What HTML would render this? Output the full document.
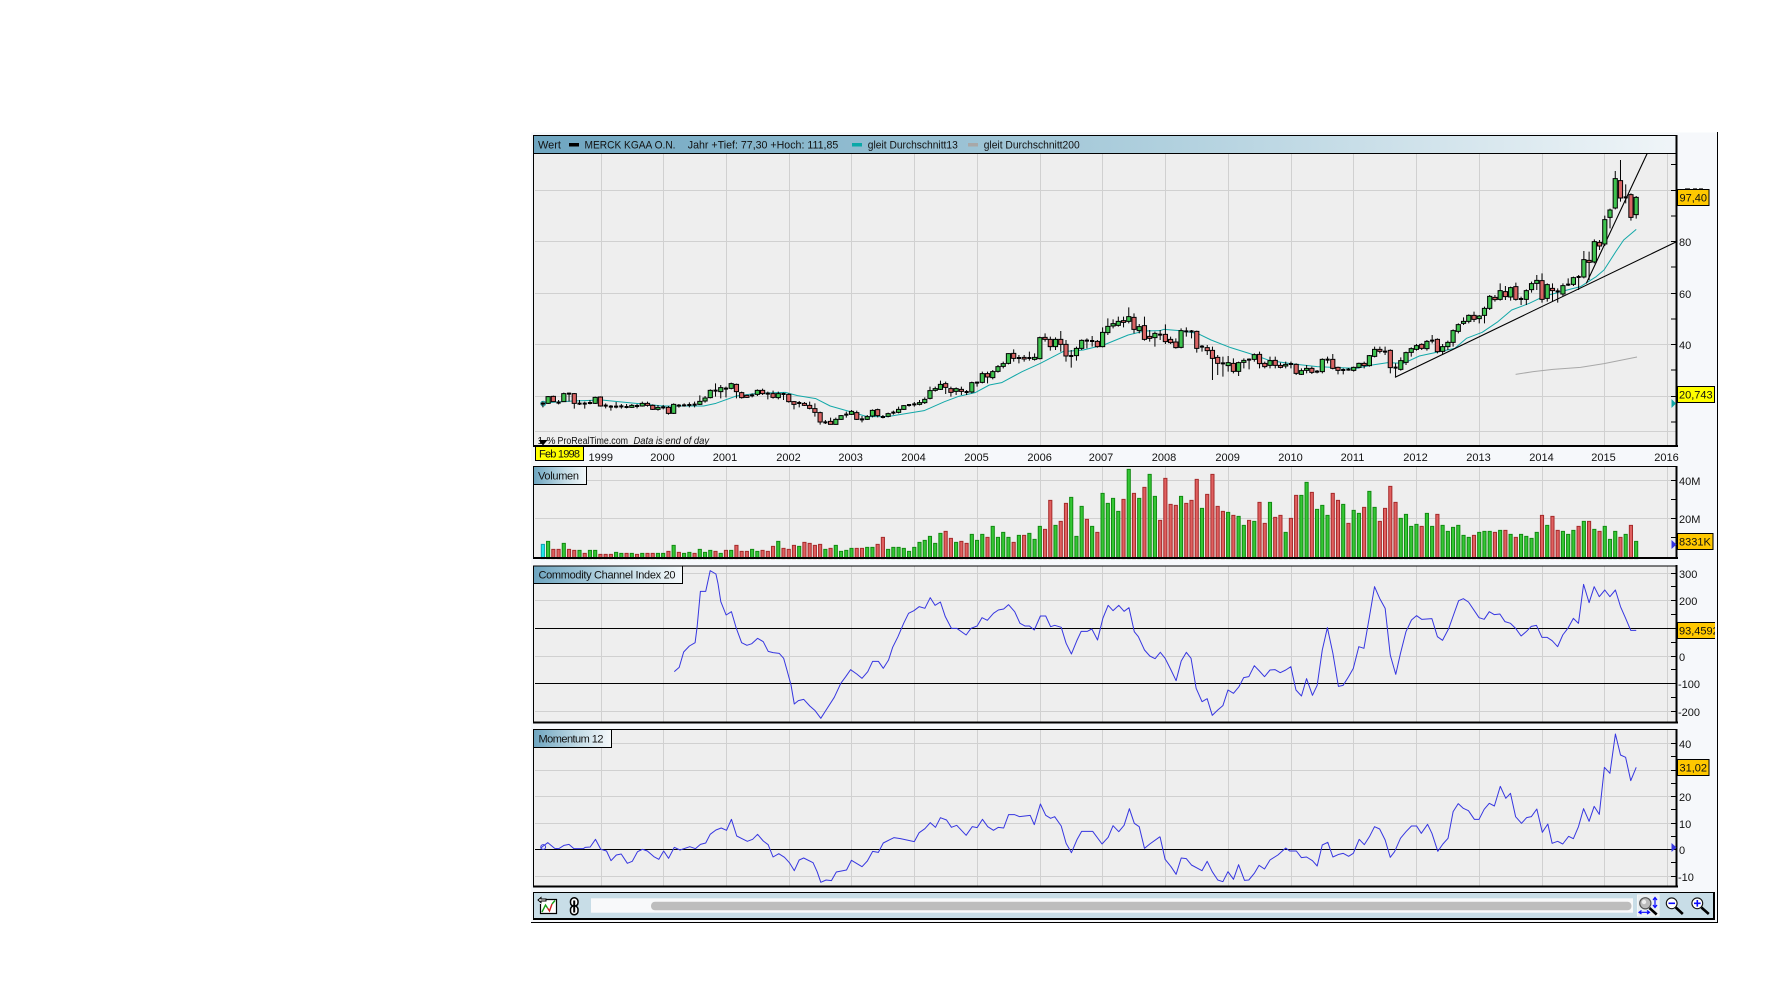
<!DOCTYPE html>
<html><head><meta charset="utf-8"><title>Merck KGaA chart</title>
<style>
html,body{margin:0;padding:0;background:#fff}
svg{display:block}
svg path{vector-effect:non-scaling-stroke}
text{font-family:"Liberation Sans",sans-serif;font-size:11px;fill:#111}
</style></head><body>
<svg xmlns="http://www.w3.org/2000/svg" width="1776" height="1003" viewBox="0 0 1776 1003">
<defs>
<linearGradient id="hd" x1="0" x2="1" y1="0" y2="0"><stop offset="0" stop-color="#6ea5c0"/><stop offset=".55" stop-color="#b0d0de"/><stop offset="1" stop-color="#f0f5f8"/></linearGradient>
<linearGradient id="lb" x1="0" x2="1" y1="0" y2="0"><stop offset="0" stop-color="#6ea5c0"/><stop offset=".6" stop-color="#c5dde7"/><stop offset="1" stop-color="#f4f8fa"/></linearGradient>
<path id="v" d="M601.5 0V1M663.5 0V1M726.5 0V1M789.5 0V1M851.5 0V1M914.5 0V1M977.5 0V1M1040.5 0V1M1102.5 0V1M1165.5 0V1M1228.5 0V1M1291.5 0V1M1353.5 0V1M1416.5 0V1M1479.5 0V1M1542.5 0V1M1604.5 0V1M1667.5 0V1"/>
</defs>
<rect x="531" y="132.5" width="1186" height="789.5" fill="#f6f8fb"/>
<path d="M1717.5 132V922M531 922.5H1718" stroke="#000" fill="none"/>

<!-- panels bg -->
<rect x="534" y="153" width="1142" height="292" fill="#eee"/>
<rect x="534" y="466" width="1142" height="92" fill="#eee"/>
<rect x="534" y="566" width="1142" height="156" fill="#eee"/>
<rect x="534" y="729" width="1142" height="157" fill="#eee"/>

<!-- grids -->
<g stroke="#d0d0d0" fill="none">
<use href="#v" transform="translate(0 153) scale(1 292)"/>
<use href="#v" transform="translate(0 466) scale(1 92)"/>
<use href="#v" transform="translate(0 566) scale(1 156)"/>
<use href="#v" transform="translate(0 729) scale(1 157)"/>
<path d="M535 190.5H1676M535 241.5H1676M535 293.5H1676M535 344.5H1676M535 396.5H1676M535 431.5H1676"/>
<path d="M535 480.5H1676M535 518.5H1676"/>
<path d="M535 573.5H1676M535 600.5H1676M535 656.5H1676M535 711.5H1676"/>
<path d="M535 743.5H1676M535 770.5H1676M535 796.5H1676M535 823.5H1676M535 876.5H1676"/>
</g>

<!-- header -->
<rect x="534" y="136" width="1142" height="17" fill="url(#hd)"/>
<text x="538" y="148.5" textLength="23" lengthAdjust="spacingAndGlyphs">Wert</text>
<rect x="569" y="143" width="10" height="3.5" fill="#000"/>
<text x="584.5" y="148.5" textLength="91" lengthAdjust="spacingAndGlyphs">MERCK KGAA O.N.</text>
<text x="687.8" y="148.5" textLength="150.5" lengthAdjust="spacingAndGlyphs">Jahr +Tief: 77,30 +Hoch: 111,85</text>
<rect x="852" y="143" width="10" height="3.5" fill="#0aa8a8"/>
<text x="867.8" y="148.5" textLength="90" lengthAdjust="spacingAndGlyphs">gleit Durchschnitt13</text>
<rect x="968" y="143" width="10" height="3.5" fill="#a8a8a8"/>
<text x="983.7" y="148.5" textLength="96" lengthAdjust="spacingAndGlyphs">gleit Durchschnitt200</text>

<!-- MA and trend lines -->
<g fill="none" stroke-linejoin="round">
<path transform="translate(520 120) scale(.40816 .33333)" stroke="#12a8a8" d="M56 849L90 846L130 843L200 840L240 845L300 852L350 858L400 858L450 858L480 850L530 828L580 820L650 817L680 827L725 836L760 858L812 876L850 890L900 890L930 884L990 872L1040 845L1075 829L1115 818L1150 795L1180 788L1230 755L1275 730L1330 695L1380 690L1430 675L1490 645L1530 633L1568 632"/>
<path transform="translate(1160 120) scale(.39293 .33333)" stroke="#12a8a8" d="M0 632L10 628L50 632L95 640L130 660L180 683L240 705L280 722L340 732L400 740L440 742L500 745L540 735L580 728L620 730L660 708L700 698L750 685L780 655L820 637L860 605L895 570L940 550L975 530L1030 512L1070 500L1110 470L1130 450L1160 395L1180 360L1212 328"/>
<path transform="translate(1160 120) scale(.39293 .33333)" stroke="#a8a8a8" d="M905 763L950 755L1000 748L1070 742L1130 731L1214 711"/>
<path transform="translate(1160 120) scale(.39293 .33333)" stroke="#000" stroke-width="1.1" d="M598 772L1315 365M1085 490L1240 100"/>
<circle cx="543.2" cy="403.6" r="2.4" stroke="#12a8a8"/>
</g>

<!-- wicks -->
<path transform="translate(542.9 120) scale(5.231 .33333)" stroke="#000" fill="none" d="M0 845V862M1 828V852M2 827V846M3 840V853M4 818V846M5 818V845M6 819V866M7 840V855M8 845V866M9 840V853M10 830V852M11 829V860M12 850V865M13 855V872M14 846V865M15 852V866M16 852V865M17 852V864M18 852V865M19 845V860M20 845V860M21 853V870M22 855V872M23 855V868M24 858V884M25 850V882M26 852V863M27 850V860M28 847V862M29 845V862M30 826V855M31 828V848M32 808V835M33 790V830M34 795V835M35 800V832M36 788V808M37 791V835M38 815V836M39 824V834M40 820V832M41 808V828M42 806V825M43 815V838M44 812V836M45 815V838M46 818V840M47 820V848M48 843V868M49 843V862M50 846V858M51 845V868M52 850V890M53 875V914M54 900V912M55 893V914M56 893V914M57 885V900M58 875V893M59 870V885M60 872V900M61 888V907M62 885V900M63 868V892M64 866V892M65 885V895M66 878V892M67 872V884M68 860V880M69 855V870M70 852V860M71 846V860M72 840V856M73 832V852M74 800V838M75 800V815M76 782V810M77 785V822M78 800V830M79 802V825M80 800V825M81 810V825M82 785V820M83 785V800M84 755V790M85 755V790M86 750V778M87 735V758M88 725V745M89 700V733M90 688V725M91 705V730M92 705V725M93 695V722M94 700V722M95 650V718M96 640V665M97 650V692M98 652V690M99 633V695M100 660V725M101 690V743M102 680V722M103 658V690M104 655V685M105 648V680M106 660V683M107 622V682M108 595V645M109 598V625M110 590V620M111 590V622M112 562V610M113 580V640M114 612V640M115 590V662M116 630V665M117 635V680M118 630V660M119 613V672M120 650V672M121 655V686M122 625V685M123 622V650M124 630V655M125 632V698M126 675V695M127 675V705M128 680V780M129 705V765M130 710V770M131 708V755M132 715V760M133 725V768M134 715V745M135 715V748M136 700V725M137 695V745M138 725V745M139 710V745M140 710V745M141 728V745M142 725V745M143 725V745M144 730V765M145 745V765M146 735V760M147 740V762M148 750V760M149 715V760M150 710V730M151 702V748M152 740V763M153 745V763M154 744V752M155 740V755M156 728V745M157 725V745M158 705V740M159 680V712M160 680V700M161 680V705M162 688V760M163 730V770M164 712V752M165 695V735M166 682V710M167 672V692M168 670V690M169 660V692M170 645V670M171 655V700M172 672V705M173 662V690M174 628V680M175 610V640M176 592V615M177 583V610M178 575V606M179 585V610M180 560V610M181 525V570M182 525V545M183 490V542M184 498V540M185 500V542M186 488V542M187 530V555M188 508V555M189 485V518M190 465V510M191 460V548M192 490V545M193 490V545M194 505V548M195 490V528M196 475V498M197 470V498M198 465V510M199 393V475M200 395V480M201 358V430M202 360V390M203 287V378M204 266V325M205 153V268M206 120V245M207 193V250M208 220V302M209 228V296"/>

<!-- candle bodies -->
<g transform="translate(540.8 120) scale(5.231 .33333)" stroke="#000">
<path fill="#3fc24f" d="M1 830h.8V850h-.8zM4 821h.8V845h-.8zM10 832h.8V850h-.8zM17 856h.8V862h-.8zM19 850h.8V858h-.8zM22 862h.8V868h-.8zM25 853h.8V880h-.8zM30 844h.8V853h-.8zM31 834h.8V843h-.8zM32 811h.8V833h-.8zM34 803h.8V815h-.8zM36 791h.8V805h-.8zM41 811h.8V823h-.8zM45 821h.8V833h-.8zM56 898h.8V913h-.8zM57 887h.8V898h-.8zM59 874h.8V883h-.8zM62 890h.8V898h-.8zM63 871h.8V888h-.8zM66 881h.8V889h-.8zM68 868h.8V877h-.8zM69 857h.8V868h-.8zM72 848h.8V853h-.8zM73 838h.8V848h-.8zM74 812h.8V835h-.8zM75 806h.8V811h-.8zM76 793h.8V808h-.8zM79 806h.8V814h-.8zM82 788h.8V816h-.8zM84 761h.8V787h-.8zM86 755h.8V773h-.8zM87 740h.8V754h-.8zM88 731h.8V739h-.8zM89 701h.8V730h-.8zM94 712h.8V718h-.8zM95 653h.8V716h-.8zM98 658h.8V680h-.8zM102 685h.8V707h-.8zM103 661h.8V685h-.8zM107 637h.8V680h-.8zM108 619h.8V638h-.8zM109 611h.8V618h-.8zM110 604h.8V616h-.8zM112 590h.8V604h-.8zM114 620h.8V632h-.8zM117 640h.8V653h-.8zM122 632h.8V682h-.8zM131 728h.8V737h-.8zM133 728h.8V754h-.8zM134 721h.8V727h-.8zM136 704h.8V718h-.8zM139 722h.8V736h-.8zM142 733h.8V738h-.8zM145 752h.8V763h-.8zM146 745h.8V751h-.8zM149 718h.8V755h-.8zM155 742h.8V751h-.8zM156 730h.8V742h-.8zM158 707h.8V737h-.8zM159 688h.8V709h-.8zM164 722h.8V748h-.8zM165 698h.8V727h-.8zM166 686h.8V697h-.8zM167 677h.8V688h-.8zM169 664h.8V686h-.8zM172 680h.8V694h-.8zM173 667h.8V680h-.8zM174 632h.8V667h-.8zM175 614h.8V634h-.8zM176 604h.8V610h-.8zM177 586h.8V604h-.8zM179 588h.8V596h-.8zM180 565h.8V586h-.8zM181 529h.8V565h-.8zM183 512h.8V538h-.8zM185 503h.8V531h-.8zM188 512h.8V538h-.8zM189 491h.8V509h-.8zM190 481h.8V490h-.8zM192 494h.8V535h-.8zM195 497h.8V522h-.8zM197 473h.8V493h-.8zM199 419h.8V471h-.8zM201 365h.8V426h-.8zM203 299h.8V372h-.8zM204 270h.8V292h-.8zM205 176h.8V264h-.8zM209 232h.8V284h-.8z"/>
<path fill="#d96464" d="M2 829h.8V845h-.8zM6 821h.8V850h-.8zM11 831h.8V858h-.8zM20 850h.8V856h-.8zM21 856h.8V868h-.8zM24 862h.8V880h-.8zM37 793h.8V815h-.8zM38 818h.8V833h-.8zM39 826h.8V832h-.8zM42 811h.8V821h-.8zM44 821h.8V832h-.8zM47 823h.8V845h-.8zM48 845h.8V853h-.8zM50 850h.8V856h-.8zM51 856h.8V865h-.8zM52 866h.8V877h-.8zM53 878h.8V906h-.8zM55 904h.8V913h-.8zM60 878h.8V898h-.8zM64 869h.8V887h-.8zM77 791h.8V802h-.8zM78 806h.8V817h-.8zM80 808h.8V814h-.8zM85 761h.8V771h-.8zM90 700h.8V715h-.8zM92 712h.8V717h-.8zM96 652h.8V658h-.8zM97 658h.8V680h-.8zM99 658h.8V673h-.8zM100 673h.8V708h-.8zM106 664h.8V680h-.8zM111 602h.8V607h-.8zM113 592h.8V628h-.8zM115 617h.8V658h-.8zM116 649h.8V655h-.8zM119 643h.8V665h-.8zM120 658h.8V668h-.8zM121 666h.8V683h-.8zM125 634h.8V685h-.8zM127 683h.8V692h-.8zM128 691h.8V715h-.8zM129 712h.8V730h-.8zM132 730h.8V754h-.8zM137 703h.8V731h-.8zM138 730h.8V740h-.8zM140 721h.8V736h-.8zM141 736h.8V742h-.8zM144 733h.8V760h-.8zM147 745h.8V757h-.8zM151 718h.8V745h-.8zM152 742h.8V751h-.8zM157 730h.8V737h-.8zM160 688h.8V694h-.8zM162 691h.8V743h-.8zM168 673h.8V685h-.8zM171 658h.8V695h-.8zM178 586h.8V598h-.8zM182 532h.8V539h-.8zM184 515h.8V530h-.8zM186 500h.8V538h-.8zM191 482h.8V538h-.8zM193 505h.8V512h-.8zM200 421h.8V427h-.8zM202 367h.8V378h-.8zM206 182h.8V234h-.8zM208 224h.8V292h-.8z"/>
<path fill="none" stroke-width="2" d="M0 851h.8M3 848h.8M5 821h.8M7 851h.8M8 851h.8M9 849h.8M12 857h.8M13 860h.8M14 860h.8M15 859h.8M16 861h.8M18 858h.8M23 862h.8M26 857h.8M27 856h.8M28 855h.8M29 854h.8M33 812h.8M35 806h.8M40 826h.8M43 821h.8M46 822h.8M49 849h.8M54 907h.8M58 884h.8M61 898h.8M65 891h.8M67 878h.8M70 855h.8M71 853h.8M81 816h.8M83 788h.8M91 714h.8M93 714h.8M101 708h.8M104 662h.8M105 663h.8M118 644h.8M123 634h.8M124 634h.8M126 680h.8M130 730h.8M135 719h.8M143 732h.8M148 755h.8M150 719h.8M153 750h.8M154 749h.8M161 695h.8M163 743h.8M170 662h.8M187 537h.8M194 514h.8M196 494h.8M198 471h.8M207 232h.8"/>
</g>

<!-- main frame -->
<path d="M533.5 445V135.5H1676M534 153.5H1676M1676.5 135V447M533 446H1678" stroke="#000" fill="none"/>
<path d="M533 446H1678" stroke="#000" stroke-width="2" fill="none"/>
<path d="M1676.5 135V447" stroke="#000" stroke-width="2" fill="none"/>
<path d="M1671 164.5H1676M1671 190.5H1676M1671 216H1676M1671 241.5H1676M1671 267H1676M1671 293.5H1676M1671 319H1676M1671 344.5H1676M1671 370H1676M1671 396.5H1676M1671 422H1676" stroke="#000" fill="none"/>

<!-- bottom notes -->
<text x="537.5" y="444" style="font-size:10px" textLength="18" lengthAdjust="spacingAndGlyphs">1-%</text>
<text x="557.5" y="444" style="font-size:10px" textLength="70.5" lengthAdjust="spacingAndGlyphs">ProRealTime.com</text>
<text x="633.5" y="444" style="font-size:10px;font-style:italic" textLength="75.5" lengthAdjust="spacingAndGlyphs">Data is end of day</text>
<path d="M538.5 440H547.5L543 445.5Z" fill="#000"/>

<!-- date axis -->
<rect x="535.5" y="446.5" width="48" height="14" fill="#ff0" stroke="#000"/>
<text x="559.5" y="457.5" text-anchor="middle" textLength="41" lengthAdjust="spacing">Feb 1998</text>
<g text-anchor="middle">
<text x="600.8" y="461">1999</text><text x="662.5" y="461">2000</text><text x="725" y="461">2001</text><text x="788.5" y="461">2002</text><text x="850.6" y="461">2003</text><text x="913.5" y="461">2004</text><text x="976.5" y="461">2005</text><text x="1039.6" y="461">2006</text><text x="1101" y="461">2007</text><text x="1164" y="461">2008</text><text x="1227.6" y="461">2009</text><text x="1290.5" y="461">2010</text><text x="1352.5" y="461">2011</text><text x="1415.5" y="461">2012</text><text x="1478.5" y="461">2013</text><text x="1541.5" y="461">2014</text><text x="1603.5" y="461">2015</text><text x="1666.5" y="461">2016</text>
</g>

<!-- volume -->
<g transform="translate(541.3 450) scale(5.231 .33333)">
<path fill="#20e8e8" stroke="#10a0b0" d="M0 283h.6V326h-.6z"/>
<path fill="#35c735" stroke="#118a11" d="M1 274h.6V326h-.6zM4 280h.6V326h-.6zM7 301h.6V326h-.6zM9 301h.6V326h-.6zM10 301h.6V326h-.6zM14 307h.6V326h-.6zM15 310h.6V326h-.6zM17 310h.6V326h-.6zM19 310h.6V326h-.6zM22 310h.6V326h-.6zM23 310h.6V326h-.6zM25 286h.6V326h-.6zM27 310h.6V326h-.6zM28 307h.6V326h-.6zM30 298h.6V326h-.6zM31 307h.6V326h-.6zM32 301h.6V326h-.6zM34 310h.6V326h-.6zM36 301h.6V326h-.6zM40 298h.6V326h-.6zM41 304h.6V326h-.6zM45 274h.6V326h-.6zM49 289h.6V326h-.6zM54 298h.6V326h-.6zM56 286h.6V326h-.6zM57 304h.6V326h-.6zM58 301h.6V326h-.6zM59 295h.6V326h-.6zM62 292h.6V326h-.6zM63 292h.6V326h-.6zM66 298h.6V326h-.6zM67 292h.6V326h-.6zM68 292h.6V326h-.6zM69 295h.6V326h-.6zM70 304h.6V326h-.6zM71 292h.6V326h-.6zM72 277h.6V326h-.6zM73 271h.6V326h-.6zM74 259h.6V326h-.6zM75 280h.6V326h-.6zM76 250h.6V326h-.6zM79 277h.6V326h-.6zM82 253h.6V326h-.6zM83 271h.6V326h-.6zM84 253h.6V326h-.6zM86 229h.6V326h-.6zM87 262h.6V326h-.6zM88 247h.6V326h-.6zM89 262h.6V326h-.6zM91 256h.6V326h-.6zM93 250h.6V326h-.6zM94 268h.6V326h-.6zM95 229h.6V326h-.6zM98 226h.6V326h-.6zM101 142h.6V326h-.6zM102 259h.6V326h-.6zM103 169h.6V326h-.6zM105 229h.6V326h-.6zM107 130h.6V326h-.6zM108 160h.6V326h-.6zM109 145h.6V326h-.6zM110 184h.6V326h-.6zM112 58h.6V326h-.6zM114 145h.6V326h-.6zM116 73h.6V326h-.6zM117 139h.6V326h-.6zM122 139h.6V326h-.6zM126 175h.6V326h-.6zM131 187h.6V326h-.6zM133 199h.6V326h-.6zM134 226h.6V326h-.6zM136 214h.6V326h-.6zM139 157h.6V326h-.6zM142 247h.6V326h-.6zM145 136h.6V326h-.6zM146 97h.6V326h-.6zM148 178h.6V326h-.6zM149 166h.6V326h-.6zM150 196h.6V326h-.6zM153 163h.6V326h-.6zM155 181h.6V326h-.6zM156 190h.6V326h-.6zM158 124h.6V326h-.6zM159 172h.6V326h-.6zM164 205h.6V326h-.6zM165 193h.6V326h-.6zM166 229h.6V326h-.6zM167 223h.6V326h-.6zM169 190h.6V326h-.6zM170 229h.6V326h-.6zM172 226h.6V326h-.6zM173 244h.6V326h-.6zM174 232h.6V326h-.6zM175 226h.6V326h-.6zM176 256h.6V326h-.6zM177 262h.6V326h-.6zM179 247h.6V326h-.6zM180 244h.6V326h-.6zM181 244h.6V326h-.6zM183 241h.6V326h-.6zM185 253h.6V326h-.6zM187 253h.6V326h-.6zM188 259h.6V326h-.6zM189 265h.6V326h-.6zM190 247h.6V326h-.6zM192 226h.6V326h-.6zM195 244h.6V326h-.6zM196 253h.6V326h-.6zM197 241h.6V326h-.6zM199 214h.6V326h-.6zM201 238h.6V326h-.6zM203 229h.6V326h-.6zM204 268h.6V326h-.6zM205 244h.6V326h-.6zM207 253h.6V326h-.6zM209 274h.6V326h-.6z"/>
<path fill="#e06060" stroke="#a52a2a" d="M2 298h.6V326h-.6zM3 298h.6V326h-.6zM5 298h.6V326h-.6zM6 301h.6V326h-.6zM8 310h.6V326h-.6zM11 313h.6V326h-.6zM12 313h.6V326h-.6zM13 313h.6V326h-.6zM16 310h.6V326h-.6zM18 313h.6V326h-.6zM20 310h.6V326h-.6zM21 310h.6V326h-.6zM24 304h.6V326h-.6zM26 307h.6V326h-.6zM29 310h.6V326h-.6zM33 304h.6V326h-.6zM35 301h.6V326h-.6zM37 286h.6V326h-.6zM38 304h.6V326h-.6zM39 304h.6V326h-.6zM42 301h.6V326h-.6zM43 304h.6V326h-.6zM44 289h.6V326h-.6zM46 295h.6V326h-.6zM47 298h.6V326h-.6zM48 286h.6V326h-.6zM50 277h.6V326h-.6zM51 280h.6V326h-.6zM52 286h.6V326h-.6zM53 283h.6V326h-.6zM55 295h.6V326h-.6zM60 295h.6V326h-.6zM61 295h.6V326h-.6zM64 283h.6V326h-.6zM65 262h.6V326h-.6zM77 244h.6V326h-.6zM78 265h.6V326h-.6zM80 274h.6V326h-.6zM81 280h.6V326h-.6zM85 262h.6V326h-.6zM90 277h.6V326h-.6zM92 256h.6V326h-.6zM96 238h.6V326h-.6zM97 151h.6V326h-.6zM99 214h.6V326h-.6zM100 160h.6V326h-.6zM104 208h.6V326h-.6zM106 247h.6V326h-.6zM111 148h.6V326h-.6zM113 130h.6V326h-.6zM115 112h.6V326h-.6zM118 211h.6V326h-.6zM119 85h.6V326h-.6zM120 163h.6V326h-.6zM121 166h.6V326h-.6zM123 160h.6V326h-.6zM124 151h.6V326h-.6zM125 88h.6V326h-.6zM127 133h.6V326h-.6zM128 73h.6V326h-.6zM129 169h.6V326h-.6zM130 184h.6V326h-.6zM132 196h.6V326h-.6zM135 211h.6V326h-.6zM137 157h.6V326h-.6zM138 220h.6V326h-.6zM140 202h.6V326h-.6zM141 196h.6V326h-.6zM143 205h.6V326h-.6zM144 136h.6V326h-.6zM147 127h.6V326h-.6zM151 130h.6V326h-.6zM152 151h.6V326h-.6zM154 220h.6V326h-.6zM157 172h.6V326h-.6zM160 214h.6V326h-.6zM161 175h.6V326h-.6zM162 109h.6V326h-.6zM163 157h.6V326h-.6zM168 229h.6V326h-.6zM171 193h.6V326h-.6zM178 256h.6V326h-.6zM182 247h.6V326h-.6zM184 241h.6V326h-.6zM186 262h.6V326h-.6zM191 196h.6V326h-.6zM193 199h.6V326h-.6zM194 241h.6V326h-.6zM198 229h.6V326h-.6zM200 214h.6V326h-.6zM202 244h.6V326h-.6zM206 262h.6V326h-.6zM208 226h.6V326h-.6z"/>
</g>
<path d="M533.5 558V466.5H1676M1671 480.5H1676M1671 499.5H1676M1671 518.5H1676M1671 537.5H1676" stroke="#000" fill="none"/>
<path d="M533 558H1678M1676.5 466V559" stroke="#000" stroke-width="2" fill="none"/>
<rect x="534" y="467" width="52.5" height="17.5" fill="url(#lb)"/>
<path d="M586.5 466V484.5H533.5" stroke="#000" fill="none"/>
<text x="538" y="479.5" textLength="41" lengthAdjust="spacing">Volumen</text>

<!-- CCI -->
<path d="M535 628.5H1676M535 683.5H1676" stroke="#000" fill="none"/>
<g fill="none" stroke="#3636e0" stroke-linejoin="round">
<path transform="translate(520 450) scale(.40816 .33333)" d="M378 665L390 652L401 606L415 588L429 578L434 530L442 424L455 424L466 362L480 372L485 400L492 455L505 495L518 485L530 535L543 578L556 586L568 581L582 565L596 575L608 604L620 608L635 610L646 625L654 660L664 705L672 762L682 752L695 748L710 768L723 782L737 805L750 780L770 742L786 700L798 680L810 659L825 672L838 685L852 665L864 634L878 634L890 655L903 630L913 592L926 560L940 520L952 490L965 482L978 470L992 475L1005 443L1017 466L1030 456L1042 500L1057 535L1070 535L1093 555L1105 535L1120 528L1132 503L1145 511L1160 490L1172 480L1185 477L1197 464L1212 485L1225 520L1237 528L1248 528L1260 540L1275 498L1288 498L1300 530L1310 526L1326 532L1338 580L1351 612L1365 570L1375 544L1390 544L1401 537L1415 570L1428 505L1441 466L1453 482L1467 466L1480 484L1492 473L1505 545L1515 560L1530 600L1543 618L1556 626L1568 608"/>
<path transform="translate(1160 450) scale(.39293 .33333)" d="M0 606L13 625L28 660L41 692L54 633L67 607L79 625L92 715L107 755L120 746L133 796L147 780L160 767L173 720L187 730L201 710L213 683L226 680L240 647L253 663L266 680L280 660L293 659L306 668L320 660L333 650L346 720L360 738L373 686L388 736L400 706L413 600L426 533L440 610L454 709L466 706L480 680L492 655L506 590L519 595L533 500L546 410L559 445L573 475L586 615L600 673L612 610L626 545L640 510L653 497L666 508L692 506L706 560L719 571L735 535L747 495L760 452L772 446L785 456L812 503L825 508L838 485L851 494L865 492L878 515L892 520L905 535L919 558L932 545L945 529L958 526L972 562L985 562L998 572L1012 590L1025 555L1038 535L1052 505L1065 520L1078 403L1092 458L1105 410L1118 440L1132 420L1145 440L1159 420L1172 470L1185 505L1198 541L1212 541"/>
</g>
<path d="M533.5 722V566H1676M1671 573.5H1676M1671 586.5H1676M1671 600.5H1676M1671 614.5H1676M1671 628.5H1676M1671 642.5H1676M1671 656.5H1676M1671 669.5H1676M1671 683.5H1676M1671 697.5H1676M1671 711.5H1676" stroke="#000" fill="none"/>
<path d="M533 722.5H1678M1676.5 565V723.5" stroke="#000" stroke-width="2" fill="none"/>
<rect x="534" y="566.5" width="148" height="17" fill="url(#lb)"/>
<path d="M682.5 566V583.5H533.5" stroke="#000" fill="none"/>
<text x="538.5" y="578.5" textLength="137" lengthAdjust="spacing">Commodity Channel Index 20</text>

<!-- Momentum -->
<path d="M535 849.5H1676" stroke="#000" fill="none"/>
<g fill="none" stroke="#3636e0" stroke-linejoin="round">
<path transform="translate(520 720) scale(.40816 .33333)" d="M50 385L57 378L68 368L85 385L95 386L108 376L120 373L132 386L155 386L160 382L172 381L185 358L198 388L212 393L223 422L236 405L248 402L263 430L275 424L288 395L300 388L312 393L328 410L340 418L352 393L364 415L378 382L392 390L416 380L430 386L442 373L455 369L466 343L480 330L493 324L506 331L518 298L531 348L544 356L557 364L570 358L582 343L596 363L608 374L620 411L634 401L648 412L660 428L672 452L684 420L695 414L718 428L728 455L737 487L750 480L763 482L775 456L800 450L812 421L838 440L851 423L864 394L878 397L890 369L916 353L932 356L966 365L978 338L992 326L1005 308L1018 322L1030 293L1045 300L1057 322L1070 316L1093 346L1108 320L1120 323L1133 298L1146 320L1160 331L1172 322L1185 324L1197 284L1212 284L1224 290L1250 286L1260 314L1275 252L1288 286L1300 295L1310 290L1326 318L1338 370L1351 398L1365 358L1376 334L1403 334L1426 372L1441 352L1453 317L1467 335L1480 316L1493 266L1505 310L1517 320L1530 385L1543 372L1568 350"/>
<path transform="translate(1160 720) scale(.39293 .33333)" d="M0 350L13 418L28 440L41 463L54 414L67 416L80 435L107 452L120 424L133 455L147 480L160 485L173 455L187 478L200 434L215 481L226 480L240 460L252 436L266 447L280 420L300 405L320 384L330 393L347 393L360 413L373 411L388 422L400 438L413 375L427 367L440 411L455 403L466 400L480 409L492 400L507 358L520 374L533 350L546 320L559 327L573 360L586 412L597 395L612 355L626 335L640 318L653 318L665 340L681 313L692 340L707 394L720 372L733 355L746 275L759 251L772 265L785 272L800 298L812 298L825 268L838 250L851 258L866 199L880 235L892 220L905 290L920 310L933 293L945 290L959 267L973 337L987 312L998 370L1012 364L1025 372L1040 349L1052 356L1065 320L1078 266L1092 304L1105 259L1118 283L1131 142L1145 160L1159 42L1172 105L1185 112L1198 182L1212 142"/>
<circle cx="543.2" cy="847" r="2.4"/>
</g>
<path d="M533.5 886V729.5H1676M1671 743.5H1676M1671 756.5H1676M1671 770.5H1676M1671 783.5H1676M1671 796.5H1676M1671 809.5H1676M1671 823.5H1676M1671 836.5H1676M1671 849.5H1676M1671 862.5H1676M1671 876.5H1676" stroke="#000" fill="none"/>
<path d="M533 886.5H1678M1676.5 729V887.5" stroke="#000" stroke-width="2" fill="none"/>
<rect x="534" y="730" width="77" height="17" fill="url(#lb)"/>
<path d="M611.5 729V747.5H533.5" stroke="#000" fill="none"/>
<text x="538.5" y="742.5" textLength="65" lengthAdjust="spacing">Momentum 12</text>

<!-- right axis labels -->
<g>
<text x="1679" y="246">80</text><text x="1679" y="298">60</text><text x="1679" y="349">40</text>
<text x="1679" y="485">40M</text><text x="1679" y="523">20M</text>
<text x="1679" y="578">300</text><text x="1679" y="605">200</text><text x="1679" y="661">0</text><text x="1678" y="688">-100</text><text x="1678" y="716">-200</text>
<text x="1679" y="748">40</text><text x="1679" y="801">20</text><text x="1679" y="828">10</text><text x="1679" y="854">0</text><text x="1678" y="881">-10</text>
</g>

<!-- value tags -->
<path d="M1685 188.7H1690M1693 188.7H1697M1699 188.7H1703" stroke="#333" fill="none"/>
<rect x="1677.5" y="189.5" width="31.5" height="16" fill="#ffc800" stroke="#000"/>
<text x="1679.5" y="201.5">97,40</text>
<rect x="1677.5" y="386.5" width="37" height="16" fill="#ff0" stroke="#000"/>
<text x="1679" y="398.5">20,743</text>
<path d="M1671.5 399V408L1676 403.5Z" fill="#12a8a8"/>
<rect x="1677.5" y="533.5" width="35.5" height="16" fill="#ffc800" stroke="#000"/>
<text x="1679" y="545.5">8331K</text>
<path d="M1671.5 540V549L1676.5 544.5Z" fill="#3636e0"/>
<svg x="1677" y="622" width="38" height="17" viewBox="0 0 38 17">
<rect x=".5" y=".5" width="42" height="16" fill="#ffc800" stroke="#000"/>
<text x="2" y="12.5">93,4592</text>
</svg>
<rect x="1677.5" y="759.5" width="31.5" height="16" fill="#ffc800" stroke="#000"/>
<text x="1679.5" y="771.5">31,02</text>
<path d="M1671.5 843V852L1676.5 847.5Z" fill="#3636e0"/>

<!-- toolbar -->
<rect x="534" y="892.5" width="1180" height="26.5" fill="#c8dde7"/>
<path d="M533.5 919V892.5H1714" stroke="#000" fill="none"/>
<path d="M533 919H1715M1714 892V920" stroke="#000" stroke-width="2" fill="none"/>
<rect x="591" y="898.3" width="1042" height="14.4" fill="#f8f9fa"/>
<rect x="651" y="901.7" width="980.5" height="8.6" rx="4" fill="#bdbdbd"/>

<!-- chart icon -->
<g>
<path d="M541.5 899.5H556.5V913.5H540.5V904" fill="#fff" stroke="#000" stroke-width="1.2"/>
<path d="M538 900L541 897.5V899H546V901H541V902.5Z" fill="#fff" stroke="#000"/>
<path d="M542 912L545.5 905L547.5 908" fill="none" stroke="#18a018" stroke-width="1.4"/>
<path d="M547.5 908L549.5 911L552 904" fill="none" stroke="#d02020" stroke-width="1.4"/>
<path d="M552 904L555 900.5" fill="none" stroke="#18a018" stroke-width="1.4"/>
</g>
<!-- link icon -->
<g fill="#fff" stroke="#000" stroke-width="1.5">
<rect x="570.5" y="897.8" width="7.5" height="8.5" rx="3.7"/>
<rect x="570.5" y="905.8" width="7.5" height="9" rx="3.7"/>
<path d="M574.2 900.5V912.5" stroke-width="2"/>
</g>
<!-- zoom icons -->
<rect x="1637.5" y="895" width="21.5" height="21" fill="#e9eff2" stroke="#f4f6f7"/>
<circle cx="1645.3" cy="903.3" r="5.6" fill="#bbb" stroke="#555" stroke-width="1.2"/>
<circle cx="1644" cy="902" r="2.2" fill="#eee"/>
<path d="M1649.5 908L1656.7 914.5" stroke="#000" stroke-width="2.6" fill="none"/>
<path d="M1655 898V907M1653 900L1655 897.5L1657 900M1653 905L1655 907.5L1657 905M1639.5 912.3H1649M1641.5 910.5L1639 912.3L1641.5 914M1647 910.5L1649.5 912.3L1647 914" stroke="#0a0aff" stroke-width="1.2" fill="none"/>
<circle cx="1671.7" cy="903.3" r="5.4" fill="#fff" stroke="#111" stroke-width="1.1"/>
<path d="M1668.5 903.3H1675" stroke="#0a0aff" stroke-width="1.6" fill="none"/>
<path d="M1675.8 907.5L1682.8 914" stroke="#000" stroke-width="2.6" fill="none"/>
<circle cx="1697.3" cy="903.3" r="5.4" fill="#fff" stroke="#111" stroke-width="1.1"/>
<path d="M1694 903.3H1700.6M1697.3 900V906.6" stroke="#0a0aff" stroke-width="1.6" fill="none"/>
<path d="M1701.4 907.5L1708.8 914" stroke="#000" stroke-width="2.6" fill="none"/>
</svg>
</body></html>
